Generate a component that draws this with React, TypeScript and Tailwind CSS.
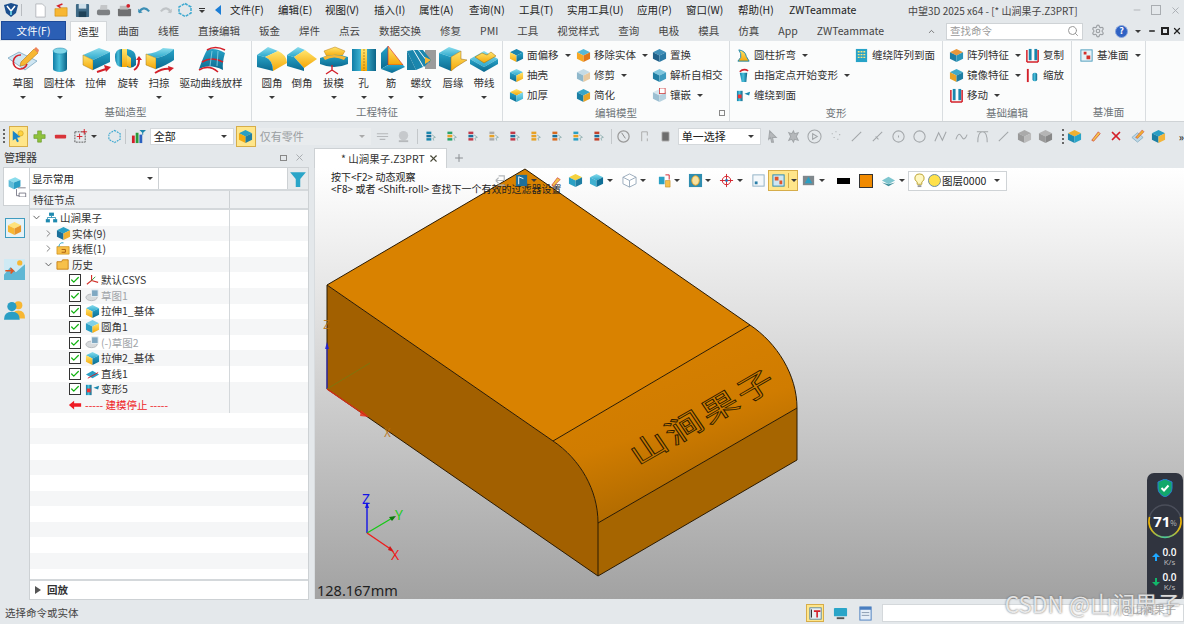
import React from 'react';
import { ChevronDown, ChevronRight, Search, Settings, Plus, X, Minus, Check } from 'lucide-react';

const Caret = ({ className = '' }: { className?: string }) => (
  <span className={`inline-block w-0 h-0 shrink-0 border-x-[3px] border-t-[3px] border-x-transparent border-t-[#3a3a3a] ${className}`} />
);

function Defs() {
  return (
    <svg className="absolute w-0 h-0">
      <defs>
        <linearGradient id="cyT" x1="0" y1="0" x2="0" y2="1"><stop offset="0" stopColor="#8adcec" /><stop offset="1" stopColor="#2aa8cc" /></linearGradient>
        <linearGradient id="cyD" x1="0" y1="0" x2="0" y2="1"><stop offset="0" stopColor="#27a3c8" /><stop offset="1" stopColor="#0b6a90" /></linearGradient>
        <linearGradient id="cyH" x1="0" y1="0" x2="1" y2="0"><stop offset="0" stopColor="#0f7da6" /><stop offset="0.45" stopColor="#49c0dc" /><stop offset="1" stopColor="#0b6488" /></linearGradient>
        <linearGradient id="yel" x1="0" y1="0" x2="0" y2="1"><stop offset="0" stopColor="#ffe56e" /><stop offset="1" stopColor="#f4a606" /></linearGradient>
        <linearGradient id="fillet" x1="0.15" y1="0" x2="0.55" y2="1"><stop offset="0" stopColor="#d98200" /><stop offset="0.55" stopColor="#d07c00" /><stop offset="1" stopColor="#a66500" /></linearGradient>
        <linearGradient id="ring" x1="0" y1="0" x2="1" y2="0"><stop offset="0" stopColor="#f0b400" /><stop offset="0.5" stopColor="#3ec9a0" /><stop offset="1" stopColor="#f0b400" /></linearGradient>
      </defs>
    </svg>
  );
}

const Big = ({ children }: { children: React.ReactNode }) => (
  <svg width="32" height="30" viewBox="0 0 32 30" className="shrink-0">{children}</svg>
);
const Redarrow = ({ d }: { d: string }) => <path d={d} fill="none" stroke="#d3202a" strokeWidth="2" strokeLinejoin="round" />;

const bigIcons: Record<string, React.ReactNode> = {
  sketch: <Big><path d="M1 13 L12 7 L30 16 L18 25 Z" fill="#cfe6f2" stroke="#7aa6c0" strokeWidth=".8" /><path d="M14 10 A7 7 0 1 0 20 19" fill="none" stroke="#d3202a" strokeWidth="1.6" /><path d="M14 17 L27 4 L31 8 L18 20 L13 21 Z" fill="#f7b733" stroke="#b97a10" strokeWidth=".6" /><path d="M27 4 L29 2 L32 5 L31 8 Z" fill="#f0845a" /></Big>,
  cyl: <Big><path d="M9 6 V24 A7 3 0 0 0 23 24 V6 Z" fill="url(#cyH)" /><ellipse cx="16" cy="6" rx="7" ry="3" fill="#7fd6e8" stroke="#1582a8" strokeWidth=".5" /></Big>,
  ext: <Big><polygon points="3,10 19,3 30,7 13,15" fill="url(#cyT)" /><polygon points="3,10 13,15 13,25 3,20" fill="url(#yel)" stroke="#9c7a20" strokeWidth=".5" /><polygon points="13,15 30,7 30,17 13,25" fill="url(#cyD)" /><Redarrow d="M17 27 L26 24" /><path d="M24 20 L31 22 L26 27 Z" fill="#d3202a" /></Big>,
  rev: <Big><path d="M3 12 Q3 4 10 4 V22 Q3 22 3 12 Z" fill="url(#cyH)" /><path d="M10 4 H15 V22 L10 22 Z" fill="url(#yel)" /><path d="M15 4 Q24 5 24 13 L24 20 Q20 24 15 22 Z" fill="url(#cyD)" /><path d="M15 10 L19 13 V23 L15 21 Z" fill="url(#yel)" /><Redarrow d="M22 25 Q27 22 27 15" /><path d="M24 15 L27 11 L30 15 Z" fill="#d3202a" /></Big>,
  sweep: <Big><path d="M3 9 Q14 8 20 3 L31 4 Q24 11 13 13 Z" fill="url(#cyT)" /><polygon points="3,9 13,13 13,24 3,20" fill="url(#yel)" stroke="#9c7a20" strokeWidth=".5" /><path d="M13 13 Q24 11 31 4 V15 Q24 20 13 24 Z" fill="url(#cyD)" /><Redarrow d="M12 28 Q20 23 27 24" /><path d="M25 21 L31 23 L26 27 Z" fill="#d3202a" /></Big>,
  loft: <Big><path d="M4 24 Q9 10 12 5 Q20 2 30 8 Q27 18 28 25 Q14 18 4 24 Z" fill="url(#cyD)" /><path d="M7 17 Q17 11 28 17" fill="none" stroke="#d3202a" strokeWidth="1.6" /><path d="M12 5 Q20 0 30 5" fill="none" stroke="#d3202a" strokeWidth="1.6" /><path d="M4 25 Q14 19 23 27" fill="none" stroke="#d3202a" strokeWidth="1.6" /><path d="M17 6 L15 21 M23 6 L22 21" stroke="#8fd4e6" strokeWidth=".8" /></Big>,
  fillet: <Big><polygon points="1,10 12,2 22,6 9,12" fill="url(#cyT)" /><path d="M9 12 L22 6 Q31 10 31 18 L17 26 Q17 15 9 12 Z" fill="url(#yel)" /><path d="M1 10 L9 12 Q17 15 17 26 L1 22 Z" fill="url(#cyD)" /></Big>,
  chamfer: <Big><polygon points="1,10 12,2 19,5 8,12" fill="url(#cyT)" /><polygon points="8,12 19,5 31,14 18,23" fill="url(#yel)" /><polygon points="1,10 8,12 18,23 18,26 1,21" fill="url(#cyD)" /></Big>,
  draft: <Big><polygon points="6,6 17,2 27,6 24,11 9,12" fill="url(#yel)" stroke="#b97a10" strokeWidth=".5" /><path d="M2 13 Q16 7 30 12 V19 Q16 25 2 19 Z" fill="url(#cyD)" /><path d="M5 12 Q16 8 28 12 L26 15 Q16 10 7 15 Z" fill="#f7b733" /><path d="M14 20 V25 M14 25 L8 29 M14 25 L20 29" stroke="#d3202a" strokeWidth="1.4" fill="none" /></Big>,
  hole: <Big><rect x="4" y="4" width="24" height="22" fill="url(#cyH)" /><rect x="13" y="4" width="6" height="22" fill="url(#yel)" /><line x1="16" y1="4" x2="16" y2="26" stroke="#9a6a10" strokeWidth=".7" strokeDasharray="2 1" /></Big>,
  rib: <Big><polygon points="6,8 13,1 13,20 6,24" fill="url(#cyD)" /><polygon points="13,1 28,20 13,20" fill="url(#yel)" stroke="#d3202a" strokeWidth=".6" /><polygon points="6,24 13,20 28,20 30,22 17,28" fill="url(#cyD)" /></Big>,
  thread: <Big><rect x="20" y="5" width="11" height="19" fill="#9b9b9b" /><path d="M2 6 L8 5 L18 22 L11 25 Z M9 5 L13 5 L23 18 L19 22 Z M14 5 L18 5 L26 15 L24 18 Z" fill="#1a86ad" /><path d="M2 6 V25 H11 Z" fill="#1a7ea3" /><path d="M20 12 L26 15 L20 19 Z" fill="#f7b733" /></Big>,
  lip: <Big><polygon points="2,8 12,2 24,6 14,12" fill="url(#cyT)" /><polygon points="2,8 14,12 14,26 2,21" fill="url(#cyD)" /><polygon points="14,12 24,6 24,14 30,15 19,22 14,26" fill="url(#yel)" stroke="#9c6a10" strokeWidth=".5" /></Big>,
  lace: <Big><polygon points="2,14 16,6 30,14 16,22" fill="url(#cyT)" /><polygon points="2,14 16,22 16,27 2,19" fill="url(#cyD)" /><polygon points="16,22 30,14 30,19 16,27" fill="url(#cyD)" /><polygon points="7,12 14,8 19,10 23,7 28,11 16,18" fill="url(#yel)" stroke="#a06a00" strokeWidth=".5" /></Big>,
};

const Cube = ({ t = 'url(#cyT)', l = 'url(#yel)', r = 'url(#cyD)', s = 15, children }: { t?: string; l?: string; r?: string; s?: number; children?: React.ReactNode }) => (
  <svg width={s} height={s} viewBox="0 0 16 16" className="shrink-0">
    <polygon points="8,1 15,4.5 8,8 1,4.5" fill={t} />
    <polygon points="1,4.5 8,8 8,15 1,11.5" fill={l} />
    <polygon points="8,8 15,4.5 15,11.5 8,15" fill={r} />
    {children}
  </svg>
);
const Ic = ({ s = 15, children }: { s?: number; children: React.ReactNode }) => (
  <svg width={s} height={s} viewBox="0 0 16 16" className="shrink-0">{children}</svg>
);

const flat = <Cube t="url(#yel)" l="url(#cyD)" r="url(#cyT)" />;
const redBar = <path d="M2 15 H14 M2 2 V15 M14 2 V15" stroke="#d3202a" strokeWidth="1.6" fill="none" />;
const bars = <><rect x="4" y="1" width="3" height="12" fill="#1a86ad" /><rect x="10" y="1" width="3" height="12" fill="#1a86ad" />{redBar}</>;

function BigBtn({ w, icon, label, caret = true }: { w: string; icon: string; label: string; caret?: boolean }) {
  return (
    <div className={`${w} flex flex-col items-center`}>
      <div className="h-[30px]">{bigIcons[icon]}</div>
      <div className="h-[15px] leading-[15px] whitespace-nowrap text-[10.5px] text-[#333]">{label}</div>
      <div className="h-[14px] flex items-center">{caret && <Caret />}</div>
    </div>
  );
}

function SmallBtn({ icon, label, caret }: { icon: React.ReactNode; label: string; caret?: boolean }) {
  return (
    <div className="h-[20px] flex items-center whitespace-nowrap text-[10.5px] text-[#333]">
      <span className="w-[18px] flex justify-start">{icon}</span>
      <span>{label}</span>
      {caret && <Caret className="ml-[6px]" />}
    </div>
  );
}

function Group({ w, label, children, launcher }: { w: string; label: string; children: React.ReactNode; launcher?: boolean }) {
  return (
    <div className={`${w} h-full shrink-0 flex flex-col border-r border-[#d9dde0] relative`}>
      <div className="flex-1 flex pt-[4px]">{children}</div>
      <div className="h-[17px] leading-[15px] text-center text-[10.5px] text-[#6e7478]">{label}</div>
      {launcher && <span className="absolute right-[4px] bottom-[5px] w-[6px] h-[6px] border border-[#888]" />}
    </div>
  );
}

const menus = [
  ['文件(F)', 'w-[48px]'], ['编辑(E)', 'w-[47px]'], ['视图(V)', 'w-[49px]'], ['插入(I)', 'w-[45px]'], ['属性(A)', 'w-[50px]'], ['查询(N)', 'w-[50px]'],
  ['工具(T)', 'w-[48px]'], ['实用工具(U)', 'w-[70px]'], ['应用(P)', 'w-[49px]'], ['窗口(W)', 'w-[52px]'], ['帮助(H)', 'w-[51px]'], ['ZWTeammate', 'w-[119px]'],
];
const tabs = ['曲面', '线框', '直接编辑', '钣金', '焊件', '点云', '数据交换', '修复', 'PMI', '工具', '视觉样式', '查询', '电极', '模具', '仿真', 'App', 'ZWTeammate'];

function TitleRow() {
  return (
    <div className="h-[20px] flex items-center shrink-0">
      <span className="w-[21px] pl-[3px]"><Ic s={16}><path d="M1 3 L8 1 L15 3 L13 11 L8 15 L3 11 Z" fill="#1b4f8f" /><path d="M4 4 L8 9 L12 4" stroke="#fff" strokeWidth="1.6" fill="none" /><rect x="7" y="9" width="2" height="4" fill="#5fc3dd" /></Ic></span>
      <span className="w-px h-[12px] bg-[#b8bcc0] mr-[8px]" />
      <div className="flex items-center">
        <span className="w-[21px] flex justify-center"><Ic><path d="M3 1 H10 L13 4 V15 H3 Z" fill="#fff" stroke="#b5b9bd" /></Ic></span>
        <span className="w-[21px] flex justify-center"><Ic><path d="M1 6 H6 L7 5 H14 V14 H1 Z" fill="#f7b733" stroke="#c98a10" strokeWidth=".6" /><path d="M9 1 L4 3 L7 5" stroke="#d3202a" strokeWidth="1.6" fill="none" /></Ic></span>
        <span className="w-[21px] flex justify-center"><Ic><rect x="1" y="1" width="14" height="14" rx="1" fill="#3f6a86" /><rect x="4" y="1" width="8" height="5" fill="#cfe0ea" /><rect x="4" y="9" width="8" height="6" fill="#1f4258" /></Ic></span>
        <span className="w-[21px] flex justify-center"><Ic><rect x="1" y="7" width="14" height="6" rx="2" fill="#7d8083" /><path d="M4 7 L5 2 H12 L12 7 Z" fill="#c4c6c8" /></Ic></span>
        <span className="w-[20px] flex justify-center"><Ic><rect x="1" y="6" width="14" height="8" rx="1" fill="#6f7072" /><rect x="3" y="3" width="9" height="4" fill="#bbb" /><circle cx="12" cy="3" r="2" fill="#d3202a" /></Ic></span>
        <span className="w-[21px] flex justify-center"><Ic><path d="M2 10 Q7 2 13 9" fill="none" stroke="#3c8fb5" strokeWidth="2.2" /><path d="M1 6 L2 11 L6 10 Z" fill="#3c8fb5" /></Ic></span>
        <span className="w-[20px] flex justify-center"><Ic><path d="M14 10 Q9 2 3 9" fill="none" stroke="#c0c4c7" strokeWidth="2.2" /><path d="M15 6 L14 11 L10 10 Z" fill="#c0c4c7" /></Ic></span>
        <span className="w-[20px] flex justify-center"><Ic s={16}><polygon points="8,1.5 14,5 14,11 8,14.5 2,11 2,5" fill="none" stroke="#3fa9d0" strokeWidth="1.5" strokeDasharray="3 1" /></Ic></span>
        <span className="w-[14px] flex flex-col items-center gap-[1px]"><span className="w-[6px] h-px bg-[#333]" /><Caret /></span>
        <span className="w-[17px] flex justify-center"><span className="w-0 h-0 border-y-[5px] border-r-[6px] border-y-transparent border-r-[#1c7ed6]" /></span>
      </div>
      <div className="ml-[4px] flex items-center text-[10.5px] text-[#222]">
        {menus.map(([m, w]) => <span key={m} className={`${w} whitespace-nowrap`}>{m}</span>)}
      </div>
      <span className="text-[10px] text-[#444] whitespace-nowrap">中望3D 2025 x64 - [* 山涧果子.Z3PRT]</span>
      <div className="ml-auto pr-[3px] flex items-center gap-[9px] text-[#a9adb1]">
        <Minus size={10} />
        <span className="w-[10px] h-[10px] border border-[#a9adb1]" />
        <X size={11} />
      </div>
    </div>
  );
}

function TabRow() {
  return (
    <div className="h-[21px] flex items-end shrink-0 relative">
      <div className="ml-[1px] w-[65px] h-[19px] mb-[1px] bg-[#2b5fb5] border border-[#1d4a98] text-white text-[10.5px] flex items-center justify-center">文件(F)</div>
      <div className="ml-[4px] w-[37px] h-[20px] bg-[#fbfcfc] border border-b-0 border-[#d3d7da] text-[#333] text-[10.5px] flex items-center justify-center">造型</div>
      <div className="ml-[11px] h-[20px] flex items-center gap-[19px] text-[10.5px] text-[#444] whitespace-nowrap">
        {tabs.map((t) => <span key={t}>{t}</span>)}
      </div>
      <div className="ml-auto h-[20px] flex items-center">
        <ChevronDown size={9} className="rotate-180 text-[#555] mr-[10px]" />
        <div className="w-[137px] h-[17px] bg-white border border-[#cfd3d6] flex items-center px-[3px] text-[10.5px] text-[#9a9a9a]">
          查找命令<Search size={12} className="ml-auto text-[#999]" />
        </div>
        <Settings size={14} className="ml-[8px] text-[#9da1a5]" />
        <span className="ml-[10px] w-[13px] h-[13px] rounded-full bg-[#2f62c4] border border-[#8aa6dc] text-white text-[9px] font-bold flex items-center justify-center">?</span>
        <Caret className="ml-[7px]" />
        <div className="ml-[7px] pr-[2px] flex items-center text-[#222]">
          <Minus size={8} strokeWidth={4} />
          <span className="ml-[5px] w-[8px] h-[8px] border-2 border-[#222]" />
          <X size={10} strokeWidth={3} className="ml-[3px]" />
        </div>
      </div>
    </div>
  );
}

function Ribbon() {
  return (
    <div className="h-[81px] bg-[#fbfcfc] flex shrink-0 border-b border-[#cfd3d6]">
      <Group w="w-[252px]" label="基础造型">
        <div className="flex pl-[5px]">
          <BigBtn w="w-[36px]" icon="sketch" label="草图" />
          <BigBtn w="w-[37px]" icon="cyl" label="圆柱体" />
          <BigBtn w="w-[35px]" icon="ext" label="拉伸" caret={false} />
          <BigBtn w="w-[30px]" icon="rev" label="旋转" caret={false} />
          <BigBtn w="w-[32px]" icon="sweep" label="扫掠" />
          <BigBtn w="w-[72px]" icon="loft" label="驱动曲线放样" />
        </div>
      </Group>
      <Group w="w-[251px]" label="工程特征">
        <div className="flex pl-[5px]">
          <BigBtn w="w-[30px]" icon="fillet" label="圆角" />
          <BigBtn w="w-[30px]" icon="chamfer" label="倒角" caret={false} />
          <BigBtn w="w-[33px]" icon="draft" label="拔模" />
          <BigBtn w="w-[27px]" icon="hole" label="孔" />
          <BigBtn w="w-[28px]" icon="rib" label="筋" />
          <BigBtn w="w-[32px]" icon="thread" label="螺纹" />
          <BigBtn w="w-[32px]" icon="lip" label="唇缘" caret={false} />
          <BigBtn w="w-[30px]" icon="lace" label="带线" />
        </div>
      </Group>
      <Group w="w-[227px]" label="编辑模型" launcher>
        <div className="flex pl-[6px]">
          <div className="w-[67px]">
            <SmallBtn icon={<Cube t="#1a86ad" l="url(#yel)" r="url(#cyD)" />} label="面偏移" caret />
            <SmallBtn icon={<Cube t="url(#cyT)" l="url(#cyD)" r="url(#yel)" />} label="抽壳" />
            <SmallBtn icon={flat} label="加厚" />
          </div>
          <div className="w-[76px]">
            <SmallBtn icon={<Cube t="#57b9d6" l="#f7a823" r="#e0781a" />} label="移除实体" caret />
            <SmallBtn icon={<Cube t="#c5dbe6" l="#8fb8cc" r="#e8c9a0" />} label="修剪" caret />
            <SmallBtn icon={<Cube t="#3aa5c6" l="#1a7fa5" r="#e7a226" />} label="简化" />
          </div>
          <div>
            <SmallBtn icon={<Cube t="#3f8fb8" l="#1f5f88" r="#2b7aa5" />} label="置换" />
            <SmallBtn icon={<Cube t="#7fc6de" l="#1f7ea3" r="#3f9cc0" />} label="解析自相交" />
            <SmallBtn icon={<Cube t="#d6e6ef" l="#9cbfd2" r="#b6d2e0"><rect x="8" y="0" width="6" height="6" fill="#fff" stroke="#c33" strokeWidth=".8" /></Cube>} label="镶嵌" caret />
          </div>
        </div>
      </Group>
      <Group w="w-[213px]" label="变形">
        <div className="flex pl-[6px]">
          <div className="w-[118px]">
            <SmallBtn icon={<Ic><path d="M3 2 Q10 3 11 9 L14 14 H2 L5 10 Q6 6 3 2 Z" fill="url(#yel)" stroke="#1a86ad" strokeWidth="1" /></Ic>} label="圆柱折弯" caret />
            <SmallBtn icon={<Ic><path d="M4 5 H12 L11 15 H6 Z" fill="url(#cyH)" /><path d="M4 4 Q8 0 13 3" stroke="#d3202a" strokeWidth="1.6" fill="none" /></Ic>} label="由指定点开始变形" caret />
            <SmallBtn icon={<Ic><rect x="1" y="3" width="6" height="11" fill="url(#cyH)" /><rect x="2" y="7" width="4" height="4" fill="#e33" /><path d="M9 6 L15 4 L14 8 Z" fill="#1a86ad" /></Ic>} label="缠绕到面" />
          </div>
          <div>
            <SmallBtn icon={<Ic><rect x="2" y="1" width="12" height="14" fill="#27a3c8" /><path d="M4 4 H12 M4 7 H12 M4 10 H12" stroke="#ffe27a" strokeWidth="1.4" strokeDasharray="2 1" /></Ic>} label="缠绕阵列到面" />
          </div>
        </div>
      </Group>
      <Group w="w-[129px]" label="基础编辑">
        <div className="flex pl-[6px]">
          <div className="w-[76px]">
            <SmallBtn icon={<Cube t="#e8973a" l="#1f7ea3" r="#2b95b8" />} label="阵列特征" caret />
            <SmallBtn icon={<Cube t="#3fa9c8" l="#e7a226" r="#1f7ea3" />} label="镜像特征" caret />
            <SmallBtn icon={<Ic>{bars}</Ic>} label="移动" caret />
          </div>
          <div>
            <SmallBtn icon={<Ic>{bars}</Ic>} label="复制" />
            <SmallBtn icon={<Ic><rect x="2" y="1" width="2" height="14" fill="#d3202a" /><rect x="8" y="5" width="5" height="9" rx="2" fill="url(#cyH)" /></Ic>} label="缩放" />
          </div>
        </div>
      </Group>
      <Group w="w-[74px]" label="基准面">
        <div className="pl-[7px]">
          <SmallBtn icon={<Ic><rect x="2" y="2" width="12" height="12" fill="#e6f2f7" stroke="#4c9dbd" /><path d="M5 4 H8 V7 H5 Z M8 8 H12 V12 H8 Z" fill="#d3302a" /></Ic>} label="基准面" caret />
        </div>
      </Group>
    </div>
  );
}

const Hl = ({ w = 'w-[19px]', children }: { w?: string; children: React.ReactNode }) => (
  <span className={`${w} h-[21px] bg-[#ffe68a] border border-[#d6ad4a] flex items-center justify-center shrink-0`}>{children}</span>
);
const Cell = ({ children }: { children: React.ReactNode }) => <span className="w-[21px] flex justify-center shrink-0">{children}</span>;
const Sep = () => <span className="block w-px h-[15px] bg-[#c3c7ca] shrink-0" />;
const Combo = ({ w, label, caretCls = '' }: { w: string; label: string; caretCls?: string }) => (
  <div className={`${w} h-[17px] bg-white border border-[#d4d8db] flex items-center pl-[3px] pr-[6px] text-[11px] text-[#222] shrink-0`}>
    {label}<Caret className={`ml-auto ${caretCls}`} />
  </div>
);

const grayPaths = [
  'M5 2 L12 9 L8 9 L9 14 L7 14 L6 9 L4 11 Z',
  'M8 2 L9 5 L13 4 L11 8 L13 12 L9 11 L8 14 L6 11 L3 12 L5 8 L3 4 L6 5 Z',
  'M8 1 A7 7 0 1 0 8 15 A7 7 0 1 0 8 1 M6 5 L11 8 L6 11 Z',
  'M4 5 H5 M8 3 H9 M12 6 H13 M6 9 H7 M10 11 H11',
  'M3 13 L13 3',
  'M3 13 L13 3 M6 8 L9 11',
  'M8 2 A6 6 0 1 0 8 14 A6 6 0 1 0 8 2 M8 7 V9',
  'M8 2 A6 6 0 1 0 8 14 A6 6 0 1 0 8 2',
  'M2 13 L6 4 L10 12 L14 3',
  'M2 11 Q5 2 8 8 T14 6',
  'M3 14 Q3 3 8 3 T13 14 M2 3 H14',
  'M3 13 L13 3',
];

function CommandBar() {
  return (
    <div className="h-[26px] pt-[2px] flex items-center shrink-0">
      <span className="w-[9px] pl-[3px] h-[15px] flex flex-col justify-between"><i className="w-[2px] h-[2px] bg-[#666]" /><i className="w-[2px] h-[2px] bg-[#666]" /><i className="w-[2px] h-[2px] bg-[#666]" /><i className="w-[2px] h-[2px] bg-[#666]" /></span>
      <Hl><Ic s={14}><path d="M2 2 L11 9 L7 10 L9 14 L7 15 L5 11 L2 13 Z" fill="#1a86c8" /><circle cx="11" cy="5" r="3" fill="#ffd23f" stroke="#b98a10" strokeWidth=".5" /></Ic></Hl>
      <span className="ml-[1px]"><Cell><Ic><path d="M6 2 H10 V6 H14 V10 H10 V14 H6 V10 H2 V6 H6 Z" fill="#8fc23c" stroke="#5f8f20" strokeWidth=".6" /></Ic></Cell></span>
      <Cell><Ic><rect x="2" y="6" width="12" height="4" rx="1" fill="#d8343a" /></Ic></Cell>
      <span className="w-[19px] flex justify-center"><Ic><rect x="2" y="3" width="11" height="11" fill="none" stroke="#555" strokeDasharray="2 1" /><path d="M9 3 H15 M12 0 V6 M4 8 H10 M7 5 V11" stroke="#d3202a" strokeWidth="1" /></Ic></span>
      <Caret className="ml-[1px]" />
      <span className="ml-[7px]"><Cell><Ic><polygon points="8,1.5 14,5 14,11 8,14.5 2,11 2,5" fill="none" stroke="#3fa9d0" strokeWidth="1.2" strokeDasharray="2 1" /></Ic></Cell></span>
      <Sep />
      <span className="ml-[2px]"><Cell><Ic><rect x="1" y="7" width="3" height="8" fill="#d3202a" /><rect x="5" y="4" width="3" height="11" fill="#2a9a3a" /><rect x="9" y="6" width="3" height="9" fill="#2a5fc0" /><path d="M9 1 H16 L13 4 V6 H12 V4 Z" fill="#1a86ad" /></Ic></Cell></span>
      <Combo w="w-[84px] ml-[1px]" label="全部" />
      <span className="ml-[2px]"><Hl w="w-[20px]"><Cube t="#2aa0c4" l="#f3a90f" r="#1f7ea3" /></Hl></span>
      <div className="ml-[1px] w-[114px] h-[17px] bg-[#e9ecee] flex items-center pl-[3px] pr-[6px] text-[11px] text-[#9a9ea2] shrink-0">仅有零件<Caret className="ml-auto border-t-[#aaa]" /></div>
      <span className="ml-[1px]"><Cell><Ic><path d="M2 5 H14 M2 8 H14 M5 11 H11" stroke="#b5b8bb" strokeWidth="1.2" /></Ic></Cell></span>
      <Cell><Ic><circle cx="8" cy="7" r="5" fill="#c6c9cc" /><rect x="3" y="12" width="10" height="2" fill="#b5b8bb" /></Ic></Cell>
      <span className="ml-[3px]"><Sep /></span>
      <span className="ml-[2px] flex">
        {['#1a86ad', '#2aa36a', '#c23a4a', '#aaa', '#c23a4a', '#e7a226', '#d96a20', '#2aa0c4', '#c2402a'].map((c, i) => (
          <Cell key={i}><Ic s={13}><rect x="3" y="2" width="6" height="3" fill={c} /><rect x="3" y="6" width="6" height="3" fill={i % 2 ? '#e7a226' : '#1a6f9a'} /><rect x="3" y="10" width="6" height="3" fill={c} /><path d="M10 6 L14 9 L11 10 L12 13" fill="none" stroke="#8aa" /></Ic></Cell>
        ))}
      </span>
      <span className="ml-[2px]"><Sep /></span>
      <span className="ml-[1px]"><Cell><Ic><circle cx="8" cy="8" r="6" fill="none" stroke="#999" strokeWidth="1.3" /><path d="M6 4 L10 10" stroke="#888" /></Ic></Cell></span>
      <Cell><Ic><path d="M5 3 V13 M11 3 V7 M11 10 V13 M5 3 H11" stroke="#aaa" fill="none" /></Ic></Cell>
      <Cell><Ic><rect x="4" y="3" width="8" height="10" rx="1" fill="#6d6d6d" stroke="#ccc" /></Ic></Cell>
      <Combo w="w-[83px] ml-[2px] mr-[1px]" label="单一选择" />
      <div className="flex">
        {grayPaths.map((d, i) => (
          <Cell key={i}><Ic><path d={d} fill={i < 2 ? '#b5b8bb' : 'none'} stroke="#a2a6a9" strokeWidth="1.1" /></Ic></Cell>
        ))}
        <span className="w-[21px] flex justify-center"><Cube t="#aaa" l="#999" r="#bbb" /></span>
        <span className="w-[21px] flex justify-center"><Cube t="#b5b5b5" l="#999" r="#888" /></span>
      </div>
      <span className="ml-[6px] h-[15px] w-[2px] border-l-2 border-dotted border-[#666]" />
      <Cell><Cube t="#f0b030" l="#1f8ab0" r="#2aa5c8" /></Cell>
      <Cell><Ic><path d="M4 12 L11 3 L13 5 L6 13 Z" fill="#f3c64a" stroke="#c33" strokeWidth=".7" /></Ic></Cell>
      <Cell><X size={14} strokeWidth={3} className="text-[#d3202a]" /></Cell>
      <Cell><Ic><path d="M2 9 L8 4 L14 9 L8 14 Z" fill="#bcd8e6" stroke="#6a98b0" strokeWidth=".6" /><path d="M6 9 L13 1 L15 3 L8 10 Z" fill="#f0b030" stroke="#c33" strokeWidth=".5" /></Ic></Cell>
      <Cell><Cube t="#2a9ec4" l="#1a7ea3" r="#f3b53a" /></Cell>
      <span className="ml-[10px] text-[10px] font-bold text-[#333]">»</span>
    </div>
  );
}

const sketchIcon = <Ic><ellipse cx="7" cy="10" rx="6" ry="3.5" fill="#d7dadc" stroke="#b5b9bc" /><rect x="7" y="2" width="7" height="7" fill="#7fa8c2" stroke="#e7eef2" /></Ic>;
const extIcon = <Cube t="url(#cyT)" l="url(#yel)" r="url(#cyD)" />;

type Row = { pad: string; open?: boolean; closed?: boolean; icon: React.ReactNode; label: string; check?: boolean; tone?: string };
const rows: Row[] = [
  { pad: 'pl-[1px]', open: true, icon: <Ic s={13}><rect x="5" y="2" width="6" height="4" fill="#1f8ab0" /><rect x="1" y="10" width="5" height="4" fill="#1f8ab0" /><rect x="10" y="10" width="5" height="4" fill="#1f8ab0" /><path d="M3 10 V8 H13 V10 M8 6 V8" stroke="#1f8ab0" fill="none" /></Ic>, label: '山涧果子' },
  { pad: 'pl-[13px]', closed: true, icon: <Cube t="#2aa0c4" l="#1a6f9a" r="#f0b030" />, label: '实体(9)' },
  { pad: 'pl-[13px]', closed: true, icon: <Ic><path d="M1 6 H14 V14 H1 Z" fill="#f7c04a" stroke="#c98a10" strokeWidth=".7" /><path d="M3 6 Q4 1 8 2" stroke="#2aa0c4" fill="none" /><path d="M6 9 H10 V12 H6" stroke="#a85a10" fill="none" /></Ic>, label: '线框(1)' },
  { pad: 'pl-[13px]', open: true, icon: <Ic><path d="M1 5 H6 L7 3 H13 V13 H1 Z" fill="#f7c04a" stroke="#c47a10" strokeWidth=".9" /></Ic>, label: '历史' },
  { pad: 'pl-[39px]', check: true, icon: <Ic><path d="M7 2 V8 L2 12 M7 8 L14 10" stroke="#d3302a" strokeWidth="1.2" fill="none" /><path d="M7 8 L11 4" stroke="#2a9a3a" /></Ic>, label: '默认CSYS' },
  { pad: 'pl-[39px]', check: true, icon: sketchIcon, label: '草图1', tone: 'text-[#a0a4a8]' },
  { pad: 'pl-[39px]', check: true, icon: extIcon, label: '拉伸1_基体' },
  { pad: 'pl-[39px]', check: true, icon: <Cube t="#7fd0e6" l="#2a9ec4" r="url(#yel)" />, label: '圆角1' },
  { pad: 'pl-[39px]', check: true, icon: sketchIcon, label: '(-)草图2', tone: 'text-[#a0a4a8]' },
  { pad: 'pl-[39px]', check: true, icon: extIcon, label: '拉伸2_基体' },
  { pad: 'pl-[39px]', check: true, icon: <Ic><polygon points="1,9 8,5 15,9 8,13" fill="#2a9ec4" /><path d="M3 13 L14 7" stroke="#d3202a" /></Ic>, label: '直线1' },
  { pad: 'pl-[39px]', check: true, icon: <Ic><rect x="1" y="3" width="6" height="11" fill="url(#cyH)" /><rect x="2" y="7" width="4" height="4" fill="#e33" /><path d="M9 6 L15 4 L14 8 Z" fill="#1a86ad" /></Ic>, label: '变形5' },
];

function Sidebar() {
  return (
    <div className="w-[310px] flex flex-col shrink-0">
      <div className="h-[19px] flex items-center px-[4px] text-[11px] text-[#333] shrink-0">
        管理器
        <span className="ml-auto w-[7px] h-[6px] border border-[#888] mr-[7px]" />
        <X size={11} className="text-[#a4a8ac] mr-[1px]" />
      </div>
      <div className="flex-1 flex min-h-0">
        <div className="w-[29px] flex flex-col items-center shrink-0">
          <div className="self-end w-[26px] h-[39px] bg-white border border-r-0 border-[#cdd1d4] flex items-center justify-center">
            <Ic s={21}><polygon points="2,3 7,1 11,3 6,5" fill="#8adcec" /><polygon points="2,3 6,5 6,10 2,8" fill="#5fbcd8" /><polygon points="6,5 11,3 11,8 6,10" fill="#2a9ec4" /><path d="M9 9 H15 M8 10 V15 H10 M10 13 H15 V16 H10 Z" stroke="#667" strokeWidth=".6" fill="none" /></Ic>
          </div>
          <div className="mt-[12px] w-[20px] h-[20px] bg-[#e6f2f7] border border-[#3f9cc0] flex items-center justify-center"><Cube t="#ffe27a" l="#f7b733" r="#e8962a" /></div>
          <div className="mt-[21px] w-[21px] h-[21px]"><Ic s={21}><rect width="16" height="16" fill="#cfeaf4" /><path d="M0 12 L5 6 L9 10 L16 4 V16 H0 Z" fill="#5fb7d4" /><circle cx="12" cy="3" r="2" fill="#f7b733" /><path d="M1 9 H7 L5 7 M7 9 L5 11" stroke="#e2561f" strokeWidth="1.2" fill="none" /></Ic></div>
          <div className="mt-[20px] w-[21px] h-[21px]"><Ic s={21}><circle cx="11" cy="4" r="3" fill="#f7b733" /><path d="M6 14 Q6 8 11 8 T16 14 Z" fill="#f7b733" /><circle cx="6" cy="5" r="3.5" fill="#2a9ec4" /><path d="M0 15 Q0 9 6 9 T12 15 Z" fill="#2a9ec4" /></Ic></div>
        </div>
        <div className="w-[280px] h-[433px] border border-[#cdd1d4] bg-white flex flex-col shrink-0">
          <div className="h-[21px] flex bg-[#e7eaec] shrink-0">
            <div className="w-[129px] bg-white border-r border-[#cdd1d4] flex items-center pl-[2px] pr-[5px] text-[10.5px] text-[#222]">显示常用<Caret className="ml-auto" /></div>
            <div className="w-[129px] bg-white border-r border-[#cdd1d4]" />
            <div className="flex-1 flex items-center justify-center"><Ic s={18}><path d="M1 2 H15 L10 8 V15 L6 15 V8 Z" fill="#2aa5c8" /></Ic></div>
          </div>
          <div className="h-[21px] flex bg-[#eef0f2] border-y-2 border-[#d4d8db] text-[10.5px] text-[#333] shrink-0">
            <div className="w-[200px] border-r border-[#cdd1d4] flex items-center pl-[3px]">特征节点</div>
          </div>
          <div className="flex-1 overflow-hidden">
            {rows.map((r, i) => (
              <div key={r.label} className={`h-[15.6px] flex ${i % 2 ? 'bg-[#f5f6f7]' : 'bg-white'}`}>
                <div className={`w-[200px] border-r border-[#d4d8db] flex items-center text-[10.5px] whitespace-nowrap ${r.tone ?? 'text-[#333]'} ${r.pad}`}>
                  {r.open && <ChevronDown size={11} className="text-[#555] mr-[2px] shrink-0" />}
                  {r.closed && <ChevronRight size={11} className="text-[#777] mr-[2px] shrink-0" />}
                  {r.check && (
                    <span className="w-[12px] h-[12px] border border-[#333] bg-white flex items-center justify-center mr-[4px] shrink-0">
                      <Check size={10} strokeWidth={3} className="text-[#12b312]" />
                    </span>
                  )}
                  <span className="w-[15px] flex justify-center shrink-0">{r.icon}</span>
                  <span className="ml-[1px]">{r.label}</span>
                </div>
              </div>
            ))}
            <div className="h-[15.6px] flex bg-[#f5f6f7]">
              <div className="w-[200px] border-r border-[#d4d8db] pl-[38px] flex items-center text-[10.5px] text-[#ee1c25] whitespace-nowrap">
                <Ic s={14}><path d="M1 8 L7 3 V6 H15 V10 H7 V13 Z" fill="#ee1c25" /></Ic>
                <span className="ml-[3px]">----- 建模停止 -----</span>
              </div>
            </div>
            {Array.from({ length: 23 }, (_, i) => (
              <div key={i} className={`h-[15.6px] ${i % 2 ? 'bg-[#f5f6f7]' : 'bg-white'}`} />
            ))}
          </div>
          <div className="h-[20px] border-t-2 border-[#d4d8db] flex items-center pl-[5px] text-[10.5px] font-bold text-[#333] shrink-0">
            <span className="w-0 h-0 border-y-[4px] border-l-[6px] border-y-transparent border-l-[#555] mr-[6px]" />回放
          </div>
        </div>
      </div>
    </div>
  );
}

function Model() {
  return (
    <svg className="absolute inset-0" width="869" height="431" viewBox="315 168 869 431">
      {/* solid */}
      <polygon points="525,169 750,325 553,441 327,285" fill="#d98200" />
      <path d="M327 285 L553 441 C580 459 598 490 598 523 V576 L327 389 Z" fill="#a26000" />
      <path d="M553 441 L750 325 C777 343 797 375 797 408 L598 523 C598 490 580 459 553 441 Z" fill="url(#fillet)" />
      <polygon points="598,523 797,408 797,460 598,576" fill="#a66500" />
      <g fill="none" stroke="#2b1a00" strokeWidth="1">
        <path d="M525 169 L327 285 V389 L598 576 L797 460 V408 C797 375 777 343 750 325 L525 169" />
        <path d="M327 285 L553 441 C580 459 598 490 598 523 V576 M553 441 L750 325 M598 523 L797 408" />
      </g>
      <text
        transform="matrix(0.866 -0.5 0.42 0.62 638 466)"
        fontFamily="'Noto Sans CJK SC', sans-serif"
        fontSize="38"
        letterSpacing="3"
        fill="none"
        stroke="#2b1a00"
        strokeWidth="1.1"
      >
        山涧果子
      </text>
      {/* triad seen through the part */}
      <g opacity="0.85">
        <line x1="327" y1="389" x2="327" y2="345" stroke="#2a2ae0" strokeWidth="1.2" />
        <path d="M325 349 L327 342 L329 349 Z" fill="#1a1ae8" />
        <line x1="327" y1="389" x2="370" y2="363" stroke="#7a7a10" strokeWidth="1" />
        <line x1="327" y1="389" x2="365" y2="415" stroke="#e8301a" strokeWidth="1.4" />
        <path d="M361 410 L369 417 L360 416 Z" fill="#e8301a" />
        <text x="323" y="329" fontSize="12" fill="#b87010">Z</text>
        <text x="384" y="437" fontSize="12" fill="#b87010">X</text>
      </g>
      {/* triad */}
      <line x1="367" y1="533" x2="367" y2="504" stroke="#1414e6" strokeWidth="1.4" />
      <line x1="367" y1="533" x2="394" y2="517" stroke="#16c916" strokeWidth="1.4" />
      <line x1="367" y1="533" x2="392" y2="550" stroke="#ee1c1c" strokeWidth="1.4" />
      <path d="M365 508 L367 502 L369 508 Z" fill="#1414e6" />
      <path d="M389 517 L396 516 L392 521 Z" fill="#0d7a0d" />
      <path d="M388 550 L394 552 L390 546 Z" fill="#d01818" />
      <g fontFamily="'Noto Sans', sans-serif" fontSize="14">
        <text x="362" y="504" fill="#1414e6">Z</text>
        <text x="395" y="520" fill="#22cc22">Y</text>
        <text x="391" y="560" fill="#ee1c1c">X</text>
      </g>
    </svg>
  );
}

const VC = ({ children, ml = '' }: { children: React.ReactNode; ml?: string }) => <span className={`w-[18px] flex justify-center shrink-0 ${ml}`}>{children}</span>;

function ViewBar() {
  return (
    <div className="absolute left-[176px] top-[2px] flex items-center h-[21px]">
      <VC><Ic><path d="M3 8 H12 V3 H6 M3 8 L6 5 M3 8 L6 11 M5 13 H13" stroke="#b3b7ba" strokeWidth="1.3" fill="none" /></Ic></VC>
      <VC ml="ml-[3px]"><Ic><rect x="2" y="2" width="12" height="12" fill="#1f6f9a" /><path d="M5 4 V12 M5 4 L10 6" stroke="#fff" /></Ic></VC>
      <Caret className="ml-[1px]" />
      <VC ml="ml-[9px]"><Ic><path d="M4 13 L10 5 L13 7 L6 14 Z" fill="#f3c64a" stroke="#c33" strokeWidth=".7" /></Ic></VC>
      <VC ml="ml-[2px]"><Cube t="#f5d23f" l="#2aa0c4" r="#1f7ea3" /></VC>
      <VC ml="ml-[3px]"><Cube t="url(#cyT)" l="#3fb0d0" r="#0f6f96" /></VC>
      <Caret className="ml-[2px]" />
      <VC ml="ml-[7px]"><Ic><polygon points="8,1 15,4.5 15,11.5 8,15 1,11.5 1,4.5" fill="#fff" stroke="#9ab" /><path d="M1 4.5 L8 8 L15 4.5 M8 8 V15" stroke="#9ab" fill="none" /></Ic></VC>
      <Caret className="ml-[2px]" />
      <VC ml="ml-[9px]"><Ic><path d="M2 4 H8 V12 H2 Z" fill="#2aa0c4" /><path d="M9 8 H14 V15 H9 Z" fill="#f7c04a" stroke="#b97a10" strokeWidth=".5" /><path d="M9 2 H13 V7" stroke="#d3202a" fill="none" /></Ic></VC>
      <Caret className="ml-[1px]" />
      <VC ml="ml-[6px]"><Ic><rect x="1" y="1" width="14" height="14" fill="#2f8db0" /><ellipse cx="8" cy="8" rx="4" ry="5" fill="#f7e2a0" stroke="#e7a226" /></Ic></VC>
      <Caret className="ml-[1px]" />
      <VC ml="ml-[6px]"><Ic><circle cx="8" cy="8" r="4.5" fill="none" stroke="#d3202a" /><path d="M8 1 V15 M1 8 H15" stroke="#d3202a" /><circle cx="8" cy="8" r="1.5" fill="#2a6fb0" /></Ic></VC>
      <Caret className="ml-[2px]" />
      <VC ml="ml-[6px]"><Ic><rect x="2" y="2" width="12" height="12" fill="#f4f8fb" stroke="#8fb0c4" /><rect x="4" y="9" width="3" height="3" fill="#2a7ea8" /></Ic></VC>
      <span className="ml-[1px] w-[30px] h-[21px] bg-[#ffe68a] border border-[#d6ad4a] flex items-center shrink-0">
        <span className="w-[20px] flex justify-center border-r border-[#d6ad4a]"><Ic><rect x="2" y="2" width="12" height="12" fill="#cfe6f0" stroke="#2a8ab0" /><path d="M4 4 H8 V8 H4 Z M9 8 H12 V12 H9 Z" fill="#e0562a" /></Ic></span>
        <Caret className="ml-[2px]" />
      </span>
      <VC ml="ml-[1px]"><Ic><rect x="2" y="3" width="12" height="10" fill="#7f878c" /><polygon points="8,4 12,11 4,11" fill="#2aa0c4" /></Ic></VC>
      <Caret className="ml-[2px]" />
      <span className="ml-[12px] w-[13px] h-[6px] bg-black shrink-0" />
      <span className="ml-[9px] w-[14px] h-[14px] bg-[#f08a00] border border-[#333] shrink-0" />
      <VC ml="ml-[6px]"><Ic><polygon points="1,8 8,4 15,8 8,12" fill="#7fc6cf" /><polygon points="1,10 8,14 15,10 8,12" fill="#3f8f9c" /></Ic></VC>
      <Caret className="ml-[2px]" />
      <div className="ml-[3px] w-[99px] h-[20px] bg-white border border-[#cfd3d6] flex items-center pl-[3px] pr-[6px] text-[10.5px] text-[#222] shrink-0">
        <Ic><path d="M8 1 A4.5 4.5 0 0 1 10.5 9.5 V12 H5.5 V9.5 A4.5 4.5 0 0 1 8 1 Z" fill="#fff7c0" stroke="#b9a030" /><rect x="6" y="13" width="4" height="2" fill="#999" /></Ic>
        <span className="w-[13px] h-[13px] rounded-full bg-[#ffe14a] border border-[#6f8fa0] mx-[1px] shrink-0" />
        图层0000
        <Caret className="ml-auto" />
      </div>
    </div>
  );
}

function NetWidget() {
  return (
    <div className="absolute left-[832px] top-[305px] w-[36px] h-[128px] rounded-[7px] bg-[#30343f] flex flex-col items-center text-white">
      <svg width="16" height="18" viewBox="0 0 16 18" className="mt-[6px]">
        <path d="M8 0 L15 3 V9 Q15 15 8 18 Q1 15 1 9 V3 Z" fill="#12a86b" stroke="#2a7fd0" strokeWidth="1" />
        <path d="M4.5 9 L7 11.5 L11.5 6.5" stroke="#fff" strokeWidth="2" fill="none" />
      </svg>
      <div className="relative mt-[6px] w-[36px] h-[36px] flex items-center justify-center">
        <svg width="36" height="36" viewBox="0 0 36 36" className="absolute inset-0">
          <circle cx="18" cy="18" r="16" fill="none" stroke="#4a4e5a" strokeWidth="1.4" />
          <path d="M2.6 14 A16 16 0 1 0 33.4 14" fill="none" stroke="url(#ring)" strokeWidth="1.6" />
        </svg>
        <span className="text-[15px] font-bold font-['Open_Sans',sans-serif] leading-none">71</span>
        <span className="text-[7px] text-[#bbb] mt-[5px]">%</span>
      </div>
      <div className="mt-[8px] flex items-center gap-[1px]">
        <svg width="8" height="8" viewBox="0 0 8 8"><path d="M4 0 L8 4 H5 V8 H3 V4 H0 Z" fill="#1ea7ff" /></svg>
        <div className="w-[18px] text-center font-['Open_Sans',sans-serif]"><div className="text-[10px] leading-[10px] font-semibold">0.0</div><div className="text-[8px] leading-[9px] text-[#bbb]">K/s</div></div>
      </div>
      <div className="mt-[6px] flex items-center gap-[1px]">
        <svg width="8" height="8" viewBox="0 0 8 8"><path d="M4 8 L8 4 H5 V0 H3 V4 H0 Z" fill="#12b76a" /></svg>
        <div className="w-[18px] text-center font-['Open_Sans',sans-serif]"><div className="text-[10px] leading-[10px] font-semibold">0.0</div><div className="text-[8px] leading-[9px] text-[#bbb]">K/s</div></div>
      </div>
    </div>
  );
}

function Viewport() {
  return (
    <div className="flex-1 flex flex-col min-w-0 pl-[4px]">
      <div className="h-[20px] flex shrink-0">
        <div className="w-[133px] h-[20px] bg-white border border-b-0 border-[#cdd1d4] flex items-center pl-[26px] text-[10.5px] text-[#333] relative z-10 whitespace-nowrap">
          * 山涧果子.Z3PRT
          <X size={11} strokeWidth={2.4} className="ml-[3px] text-[#4a4a3a]" />
        </div>
        <Plus size={12} className="ml-[6px] mt-[4px] text-[#8a8e92]" />
      </div>
      <div className="relative h-[431px] bg-gradient-to-b from-white via-[#e0e0e0] via-35% to-[#a2a2a2] overflow-hidden border-l border-[#d8dcdf]">
        <Model />
        <div className="absolute left-[16px] top-[3px] text-[10px] leading-[12px] text-[#222] whitespace-nowrap">
          <div>按下&lt;F2&gt; 动态观察</div>
          <div>&lt;F8&gt; 或者 &lt;Shift-roll&gt; 查找下一个有效的过滤器设置</div>
        </div>
        <ViewBar />
        <div className="absolute left-[2px] bottom-0 text-[14.5px] leading-[18px] font-['Noto_Sans',sans-serif] text-[#1f1f1f]">128.167mm</div>
        <NetWidget />
      </div>
    </div>
  );
}

function StatusBar() {
  return (
    <div className="h-[24px] pt-[2px] flex items-center shrink-0">
      <span className="pl-[5px] text-[10.5px] text-[#444]">选择命令或实体</span>
      <div className="ml-auto flex items-center">
        <span className="w-[18px] h-[18px] bg-[#ffe68a] border border-[#d6ad4a] flex items-center justify-center"><Ic s={13}><rect x="1" y="1" width="14" height="14" fill="#e8eff3" stroke="#4a7ea0" /><path d="M6 5 H14 M10 5 V13" stroke="#d3202a" strokeWidth="2" /><path d="M3 3 V13" stroke="#333" strokeWidth="1.4" /></Ic></span>
        <span className="ml-[7px] w-[18px] flex justify-center"><Ic><rect x="1" y="2" width="14" height="9" rx="1" fill="#2aa5c8" /><rect x="4" y="12" width="8" height="2" fill="#555" /></Ic></span>
        <span className="ml-[7px] w-[18px] flex justify-center"><Ic><rect x="2" y="1" width="12" height="14" fill="#e6eef8" stroke="#4a7ec0" /><rect x="2" y="1" width="12" height="3" fill="#4a7ec0" /><path d="M4 7 H12 M4 10 H12" stroke="#8a9ab0" /></Ic></span>
        <div className="ml-[8px] w-[302px] h-[18px] bg-white border border-[#d4d8db]" />
      </div>
    </div>
  );
}

export default function App() {
  return (
    <div className="relative w-[1184px] h-[624px] overflow-hidden flex flex-col bg-[#e4e8eb] font-['Noto_Sans_CJK_SC',sans-serif]">
      <Defs />
      <TitleRow />
      <TabRow />
      <Ribbon />
      <CommandBar />
      <div className="flex flex-1 min-h-0">
        <Sidebar />
        <Viewport />
      </div>
      <StatusBar />
      {/* watermark over the capture */}
      <div className="absolute right-[4px] bottom-[8px] text-[22.5px] leading-[26px] text-white/80 [text-shadow:0_0_2px_#555] whitespace-nowrap">CSDN @山涧果子</div>
      <div className="absolute right-[8px] bottom-[8px] text-[11px] leading-[14px] text-[#888]/70 whitespace-nowrap">@山涧果子</div>
    </div>
  );
}
